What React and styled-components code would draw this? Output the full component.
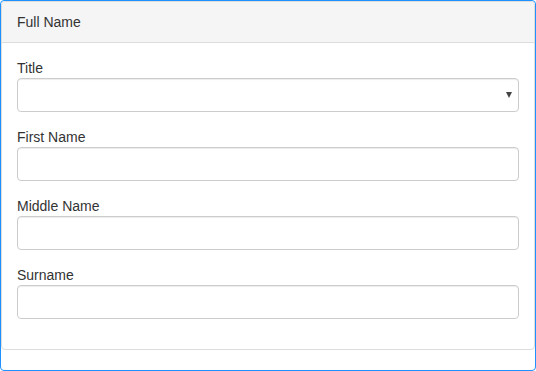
import React from "react";
import styled, { createGlobalStyle } from "styled-components";

const Global = createGlobalStyle`
  * { box-sizing: border-box; }
  body {
    margin: 0;
    font-family: "Liberation Sans", Arial, sans-serif;
    font-size: 14px;
    color: #333;
    background: #fff;
  }
`

const Frame = styled.div`
  height: 371px;
  border: 1px solid #1e90ff;
  border-radius: 4px;
  overflow: hidden;
`

const Panel = styled.div`
  border: 1px solid #ddd;
  border-radius: 4px;
  background: #fff;
`

const Heading = styled.div`
  background: #f5f5f5;
  border-bottom: 1px solid #ddd;
  padding: 10px 15px;
  line-height: 20px;
  border-radius: 3px 3px 0 0;
`

const Body = styled.div`
  padding: 15px;
`

const Group = styled.div`
  margin-bottom: 15px;
`

const Label = styled.label`
  display: block;
  line-height: 20px;
`

const Input = styled.input`
  display: block;
  width: 100%;
  height: 34px;
  border: 1px solid #ccc;
  border-radius: 4px;
  padding: 6px 12px;
  font: inherit;
  color: #555;
  background: #fff;
  box-shadow: inset 0 1px 1px rgba(0,0,0,.075);
  outline: none;
`

const SelectWrap = styled.div`
  position: relative;
`

const Select = styled(Input).attrs({ as: "select" })`
  appearance: none;
`

const Arrow = styled.span`
  position: absolute;
  right: 7px;
  top: 14px;
  width: 0;
  height: 0;
  border-left: 3.5px solid transparent;
  border-right: 3.5px solid transparent;
  border-top: 6px solid #444;
  pointer-events: none;
`

function Field({ label }) {
  return (
    <Group>
      <Label>{label}</Label>
      <Input type="text" />
    </Group>
  )
}

function App() {
  return (
    <Frame>
      <Global />
      <Panel>
        <Heading>Full Name</Heading>
        <Body>
          <Group>
            <Label>Title</Label>
            <SelectWrap>
              <Select defaultValue="">
                <option value=""></option>
              </Select>
              <Arrow />
            </SelectWrap>
          </Group>
          <Field label="First Name" />
          <Field label="Middle Name" />
          <Field label="Surname" />
        </Body>
      </Panel>
    </Frame>
  );
}
export default App;
